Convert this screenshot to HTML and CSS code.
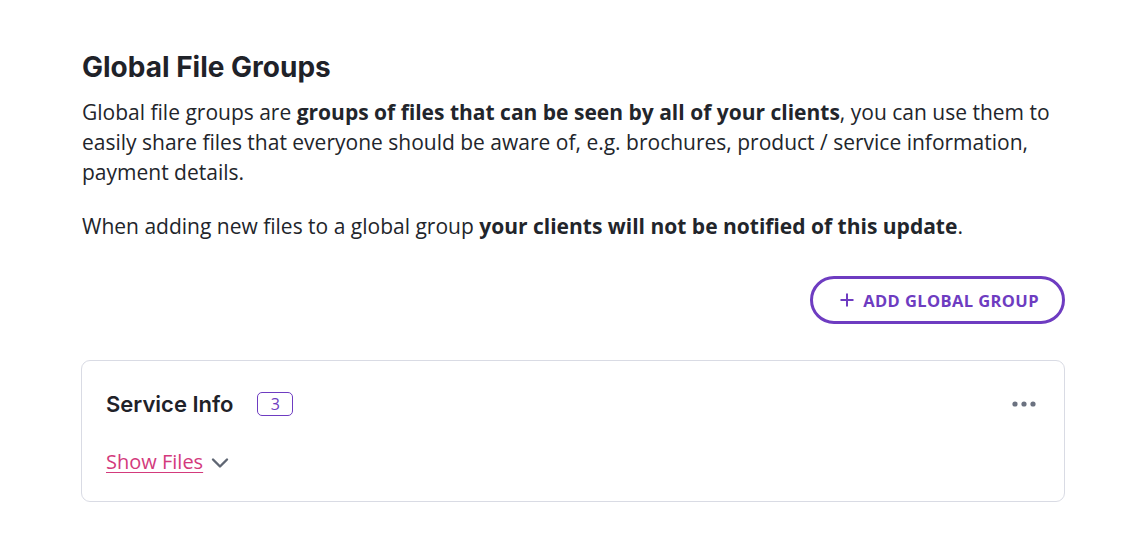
FILE: index.html
```html
<!doctype html>
<html lang="en">
  <head>
    <meta charset="UTF-8" />
    <meta name="viewport" content="width=device-width, initial-scale=1.0" />
    <title>Global File Groups</title>
    <link rel="stylesheet" href="styles.css">
  </head>
  <body>
    <div class="page">
      <h2 class="pageTitle">Global File Groups</h2>
      <p class="intro">
        Global file groups are <strong>groups of files that can be seen by all of your clients</strong>, you can use them to
        easily share files that everyone should be aware of, e.g. brochures, product / service information,
        payment details.
      </p>
      <p class="intro">
        When adding new files to a global group <strong>your clients will not be notified of this update</strong>.
      </p>

      <div class="actions">
        <button class="btnOutline" type="button">
          <svg width="14" height="14" viewBox="0 0 14 14" aria-hidden="true">
            <path d="M7 0.5v13M0.5 7h13" stroke="currentColor" stroke-width="2" fill="none"/>
          </svg>
          ADD GLOBAL GROUP
        </button>
      </div>

      <div class="groupCard">
        <div class="groupHeader">
          <h3 class="groupName">Service Info</h3>
          <span class="countBadge">3</span>
          <button class="moreBtn" type="button" aria-label="More options">
            <svg width="24" height="6" viewBox="0 0 24 6">
              <circle cx="3" cy="3" r="2.6" fill="currentColor"/>
              <circle cx="12" cy="3" r="2.6" fill="currentColor"/>
              <circle cx="21" cy="3" r="2.6" fill="currentColor"/>
            </svg>
          </button>
        </div>
        <div class="groupFooter">
          <a href="#" class="toggleLink">Show Files</a>
          <svg class="chevron" width="18" height="12" viewBox="0 0 18 12" aria-hidden="true">
            <path d="M2 2.5l7 7 7-7" stroke="currentColor" stroke-width="2.4" fill="none" stroke-linecap="round" stroke-linejoin="round"/>
          </svg>
        </div>
      </div>
    </div>
  </body>
</html>
```

FILE: styles.css
```css
body {
  margin: 0;
  font-family: 'Open Sans', sans-serif;
  color: #22252b;
  background: #fff;
}

.page {
  width: 984px;
  padding: 49px 0 0 81px;
}

.pageTitle {
  font-family: 'Inter', sans-serif;
  font-weight: 700;
  font-size: 28px;
  line-height: 36px;
  margin: 0 0 12px 1px;
  color: #1f2229;
}

.intro {
  font-size: 21px;
  line-height: 30px;
  margin: 0 0 24px 1px;
}

.intro strong {
  font-weight: 700;
}

.actions {
  display: flex;
  justify-content: flex-end;
  margin-top: 35px;
}

.btnOutline {
  display: flex;
  align-items: center;
  gap: 9px;
  height: 48px;
  padding: 0 23px 0 27px;
  border: 3px solid #6e3cc1;
  border-radius: 24px;
  background: #fff;
  color: #6e3cc1;
  font-family: 'Open Sans', sans-serif;
  font-weight: 700;
  font-size: 16.5px;
  letter-spacing: 0.4px;
  cursor: pointer;
}

.groupCard {
  margin-top: 36px;
  border: 1px solid #d9dbe4;
  border-radius: 9px;
  padding: 29px 24px 25px 24px;
}

.groupHeader {
  display: flex;
  align-items: center;
  height: 28px;
}

.groupName {
  font-family: 'Inter', sans-serif;
  font-weight: 600;
  font-size: 22px;
  margin: 0;
  color: #1f2229;
}

.countBadge {
  margin-left: 24px;
  width: 34px;
  height: 22px;
  border: 1px solid #6e3cc1;
  border-radius: 5px;
  color: #6e3cc1;
  font-size: 16px;
  display: flex;
  align-items: center;
  justify-content: center;
}

.moreBtn {
  margin-left: auto;
  margin-right: 4px;
  border: 0;
  background: none;
  padding: 0;
  color: #6b7280;
  display: flex;
  cursor: pointer;
}

.groupFooter {
  display: flex;
  align-items: center;
  gap: 8px;
  margin-top: 30px;
}

.toggleLink {
  font-size: 20px;
  line-height: 28px;
  color: #d33a7c;
  text-decoration: underline;
  text-underline-offset: 3px;
  text-decoration-thickness: 1px;
}

.chevron {
  color: #5f6673;
  margin-top: 2px;
}
```
